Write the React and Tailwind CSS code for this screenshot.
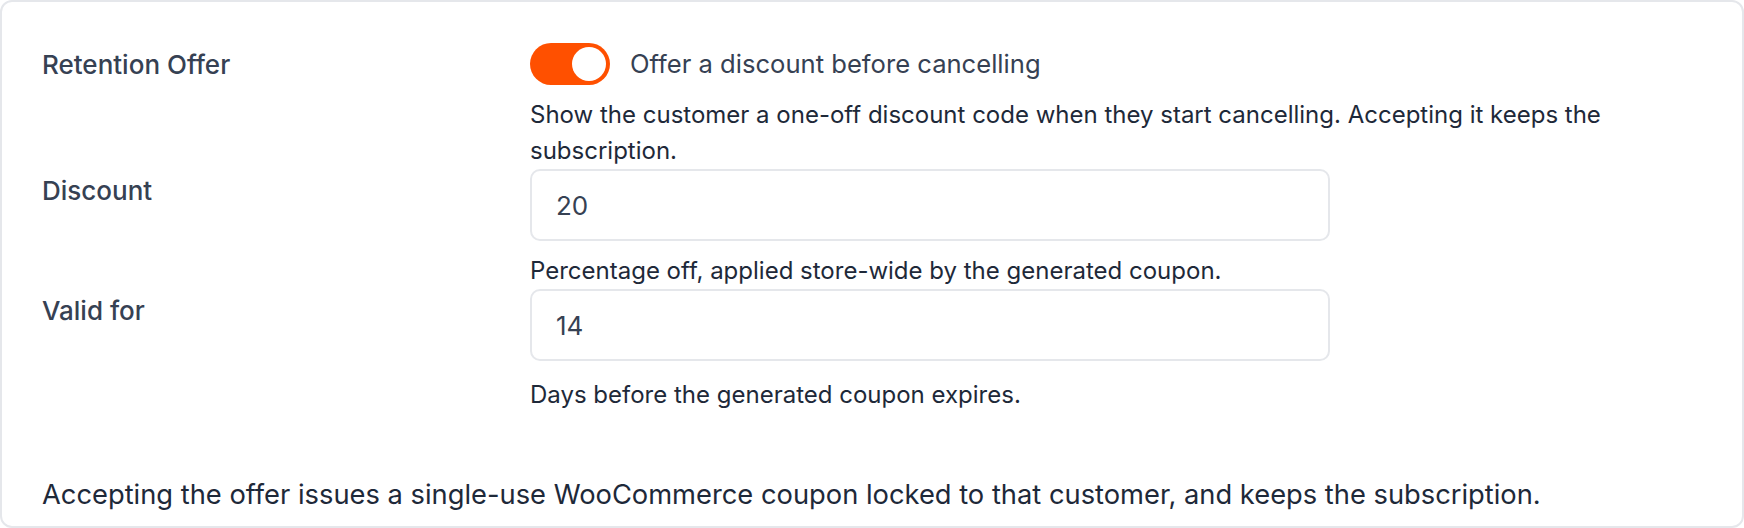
import { useState } from "react";

function Toggle({ checked, onChange }) {
  return (
    <button
      type="button"
      role="switch"
      aria-checked={checked}
      onClick={() => onChange(!checked)}
      className={`flex h-[42px] w-[80px] shrink-0 items-center rounded-full p-1 ${
        checked ? "justify-end bg-[#ff5000]" : "justify-start bg-gray-300"
      }`}
    >
      <span className="block h-[34px] w-[34px] rounded-full bg-white" />
    </button>
  );
}

function FieldLabel({ children }) {
  return <div className="text-[26px] font-medium leading-[44px] text-gray-700">{children}</div>;
}

function Help({ className = "mt-3", children }) {
  return <p className={`${className} max-w-[1100px] text-[24px] leading-9 text-gray-800`}>{children}</p>;
}

function NumberInput({ value, onChange }) {
  return (
    <input
      type="text"
      value={value}
      onChange={(e) => onChange(e.target.value)}
      className="block h-[72px] w-[800px] rounded-[10px] border-2 border-gray-200 bg-white px-6 text-[26px] text-gray-700 outline-none"
    />
  );
}

export default function App() {
  const [enabled, setEnabled] = useState(true);
  const [discount, setDiscount] = useState("20");
  const [days, setDays] = useState("14");

  return (
    <div className="bg-white font-[family-name:Inter,sans-serif]">
      <div className="h-[528px] rounded-[12px] border-2 border-gray-200 bg-white px-10 pt-[41px]">
        <div className="grid grid-cols-[488px_1fr]">
          {/* Retention offer toggle */}
          <FieldLabel>Retention Offer</FieldLabel>
          <div>
            <div className="flex items-center gap-5">
              <Toggle checked={enabled} onChange={setEnabled} />
              <span className="text-[25.6px] text-gray-700">Offer a discount before cancelling</span>
            </div>
            <Help>
              Show the customer a one-off discount code when they start cancelling. Accepting it keeps the
              subscription.
            </Help>
          </div>

          {/* Discount percentage */}
          <FieldLabel>Discount</FieldLabel>
          <div>
            <NumberInput value={discount} onChange={setDiscount} />
            <Help>Percentage off, applied store-wide by the generated coupon.</Help>
          </div>

          {/* Coupon lifetime */}
          <FieldLabel>Valid for</FieldLabel>
          <div>
            <NumberInput value={days} onChange={setDays} />
            <Help className="mt-4">Days before the generated coupon expires.</Help>
          </div>
        </div>

        <p className="mt-[62px] text-[27.3px] leading-[40px] text-gray-800">
          Accepting the offer issues a single-use WooCommerce coupon locked to that customer, and keeps the
          subscription.
        </p>
      </div>
    </div>
  );
}
